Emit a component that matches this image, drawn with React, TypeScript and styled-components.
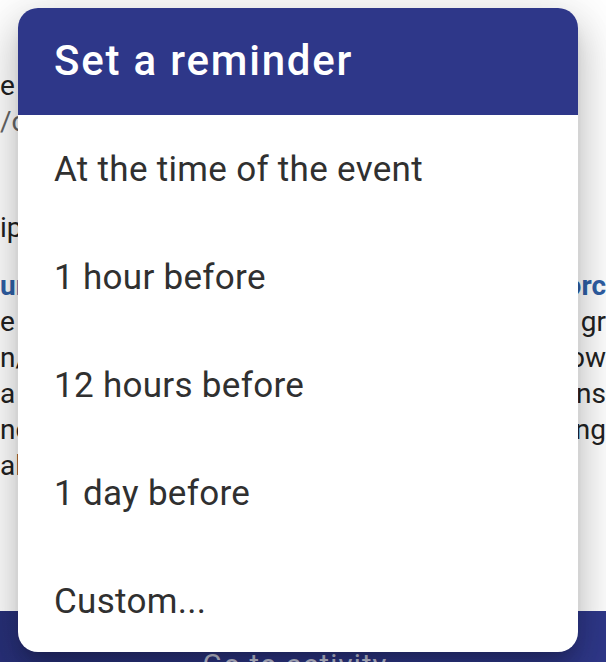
import React from "react";
import styled, { createGlobalStyle } from "styled-components";

const Global = createGlobalStyle`
  html, body { margin: 0; padding: 0; background: #fff; }
  body { font-family: Roboto, "Noto Sans", Arial, sans-serif; }
`;

const Page = styled.div`
  position: relative;
  width: 606px;
  height: 662px;
  overflow: hidden;
  display: flex;
  flex-direction: column;
  background: #fff;
`;

const Content = styled.div`
  flex: 1;
  display: flex;
  flex-direction: column;
  padding-top: 68px;
  font-size: 28px;
  color: #222;
`;

const Line = styled.div<{ $h?: number; $tone?: "muted" | "link" }>`
  height: ${(p) => p.$h ?? 36}px;
  line-height: ${(p) => p.$h ?? 36}px;
  display: flex;
  justify-content: space-between;
  white-space: nowrap;
  color: ${(p) =>
    p.$tone === "muted" ? "#666" : p.$tone === "link" ? "#2f5fa5" : "#222"};
  font-weight: ${(p) => (p.$tone === "link" ? 700 : 400)};
`;

const BottomBar = styled.div`
  height: 51px;
  background: linear-gradient(90deg, #283078, #2e3788 50%, #2f388a);
  color: #c9cbe0;
  display: flex;
  justify-content: center;
  align-items: flex-start;
  font-size: 29px;
  letter-spacing: 1.2px;
  padding-top: 40px;
  padding-right: 16px;
  box-sizing: border-box;
  line-height: 29px;
  overflow: hidden;
`;

const Dialog = styled.div`
  position: absolute;
  left: 18px;
  top: 8px;
  width: 560px;
  height: 644px;
  background: #fff;
  border-radius: 20px;
  overflow: hidden;
  display: flex;
  flex-direction: column;
  box-shadow: 0 11px 15px -7px rgba(0, 0, 0, 0.2),
    0 24px 38px 3px rgba(0, 0, 0, 0.14), 0 9px 46px 8px rgba(0, 0, 0, 0.12);
`;

const Header = styled.div`
  height: 107px;
  flex-shrink: 0;
  background: #2e3789;
  color: #fff;
  display: flex;
  align-items: center;
  padding: 0 36px;
  padding-bottom: 2px;
  box-sizing: border-box;
`;

const Title = styled.h2`
  margin: 0;
  font-size: 42px;
  font-weight: 500;
  letter-spacing: 1.8px;
`;

const List = styled.ul`
  list-style: none;
  margin: 0;
  padding: 0;
  display: flex;
  flex-direction: column;
`;

const Item = styled.li`
  height: 108px;
  flex-shrink: 0;
  display: flex;
  align-items: center;
  padding: 0 36px;
  font-size: 35px;
  letter-spacing: 0.3px;
  color: #303030;
`;

const options = [
  "At the time of the event",
  "1 hour before",
  "12 hours before",
  "1 day before",
  "Custom...",
];

export default function App() {
  return (
    <Page>
      <Global />
      <Content>
        <Line><span>e</span><span></span></Line>
        <Line $tone="muted"><span>/c</span><span></span></Line>
        <Line $h={70}><span></span><span></span></Line>
        <Line><span>ip</span><span></span></Line>
        <Line $h={22}><span></span><span></span></Line>
        <Line $tone="link"><span>ur</span><span>orc</span></Line>
        <Line><span>e</span><span>gr</span></Line>
        <Line><span>n/</span><span>ow</span></Line>
        <Line><span>a</span><span>ns</span></Line>
        <Line><span>nc</span><span>ng</span></Line>
        <Line><span>al</span><span></span></Line>
      </Content>
      <BottomBar>Go to activity</BottomBar>
      <Dialog role="dialog">
        <Header>
          <Title>Set a reminder</Title>
        </Header>
        <List>
          {options.map((o) => (
            <Item key={o}>{o}</Item>
          ))}
        </List>
      </Dialog>
    </Page>
  );
}
